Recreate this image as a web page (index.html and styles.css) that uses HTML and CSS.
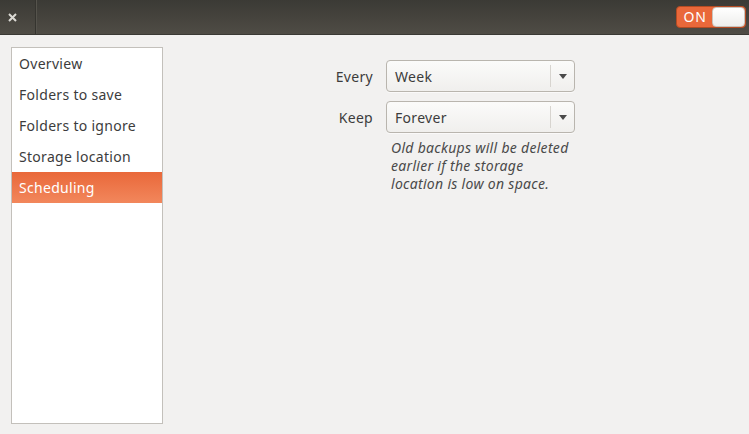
FILE: index.html
```html
<!DOCTYPE html>
<html>
<head>
<meta charset="utf-8">
<link rel="stylesheet" href="styles.css">
</head>
<body>
<div class="window">
  <header class="headerbar">
    <div class="close-box">
      <svg class="close-icon" width="9" height="9" viewBox="0 0 9 9"><path d="M1 1 L8 8 M8 1 L1 8" stroke="#dcdad5" stroke-width="2" stroke-linecap="butt"/></svg>
    </div>
    <div class="header-fill"></div>
    <div class="switch">
      <span class="switch-on">ON</span>
      <span class="switch-knob"></span>
    </div>
  </header>
  <main class="content">
    <nav class="sidebar">
      <div class="row">Overview</div>
      <div class="row">Folders to save</div>
      <div class="row">Folders to ignore</div>
      <div class="row">Storage location</div>
      <div class="row selected">Scheduling</div>
    </nav>
    <section class="settings">
      <div class="grid">
        <label class="lbl">Every</label>
        <div class="combo"><span class="combo-text">Week</span><span class="combo-sep"></span><span class="combo-arrow"></span></div>
        <label class="lbl">Keep</label>
        <div class="combo"><span class="combo-text">Forever</span><span class="combo-sep"></span><span class="combo-arrow"></span></div>
        <span></span>
        <p class="help">Old backups will be deleted<br>earlier if the storage<br>location is low on space.</p>
      </div>
    </section>
  </main>
</div>
</body>
</html>
```
FILE: styles.css
```css
* { box-sizing: border-box; }
html, body { margin: 0; padding: 0; }
body {
  width: 749px;
  height: 434px;
  overflow: hidden;
  background: #f2f1f0;
  font-family: "Noto Sans", "Open Sans", sans-serif;
  font-size: 14px;
  letter-spacing: 0.3px;
  color: #3c3c3c;
}
.window { display: flex; flex-direction: column; height: 434px; }
.headerbar {
  height: 35px;
  display: flex;
  align-items: stretch;
  background: linear-gradient(#3b3a35, #4f4c45);
  border-bottom: 1px solid #3a3934;
  flex-shrink: 0;
}
.close-box {
  width: 36px;
  border-right: 1px solid #35342f;
  display: flex;
  align-items: center;
  justify-content: center;
  padding-right: 10px;
  padding-top: 1px;
}
.header-fill { flex: 1; border-left: 1px solid #55534c; }
.switch {
  align-self: center;
  margin-right: 3px;
  margin-top: -1px;
  width: 70px;
  height: 22px;
  border-radius: 4px;
  background: #e9683a;
  border: 1px solid #b44b23;
  display: flex;
  align-items: stretch;
  overflow: hidden;
}
.switch-on {
  flex: 1;
  color: #fff;
  font-size: 14px;
  letter-spacing: 0.8px;
  display: flex;
  align-items: center;
  justify-content: center;
  padding-left: 1px;
}
.switch-knob {
  width: 33px;
  background: linear-gradient(#ffffff, #eeeeec);
  border-radius: 4px;
  border: 1px solid #c8c4bd;
}
.content {
  flex: 1;
  display: flex;
  padding: 12px 0 10px 11px;
}
.sidebar {
  width: 152px;
  background: #fff;
  border: 1px solid #c3c0bb;
  display: flex;
  flex-direction: column;
}
.row {
  height: 31px;
  line-height: 31px;
  padding-left: 7px;
  color: #3c3c3c;
}
.row.selected {
  background: linear-gradient(#e9683a, #f2875c);
  color: #fff;
}
.settings {
  flex: 1;
  display: flex;
  justify-content: flex-start;
  padding-left: 165px;
  padding-top: 13px;
}
.grid {
  display: grid;
  grid-template-columns: 45px 189px;
  column-gap: 13px;
  row-gap: 9px;
  align-items: center;
  align-content: start;
}
.lbl { text-align: right; color: #3c3c3c; white-space: nowrap; }
.combo {
  height: 32px;
  border: 1px solid #b9b5ae;
  border-radius: 4px;
  background: linear-gradient(#fbfbfa, #f0efed);
  display: flex;
  align-items: center;
  box-shadow: 0 1px 0 rgba(255,255,255,0.6);
}
.combo-text { flex: 1; padding-left: 8px; color: #3c3c3c; }
.combo-sep { width: 1px; height: 22px; background: #d7d4cf; }
.combo-arrow {
  width: 23px;
  display: flex;
  justify-content: center;
}
.combo-arrow::before {
  content: "";
  border-left: 4px solid transparent;
  border-right: 4px solid transparent;
  border-top: 5px solid #4a4a4a;
}
.help {
  margin: -3px 0 0 5px;
  font-style: italic;
  line-height: 18px;
  color: #4a4a4a;
  white-space: nowrap;
}
```
